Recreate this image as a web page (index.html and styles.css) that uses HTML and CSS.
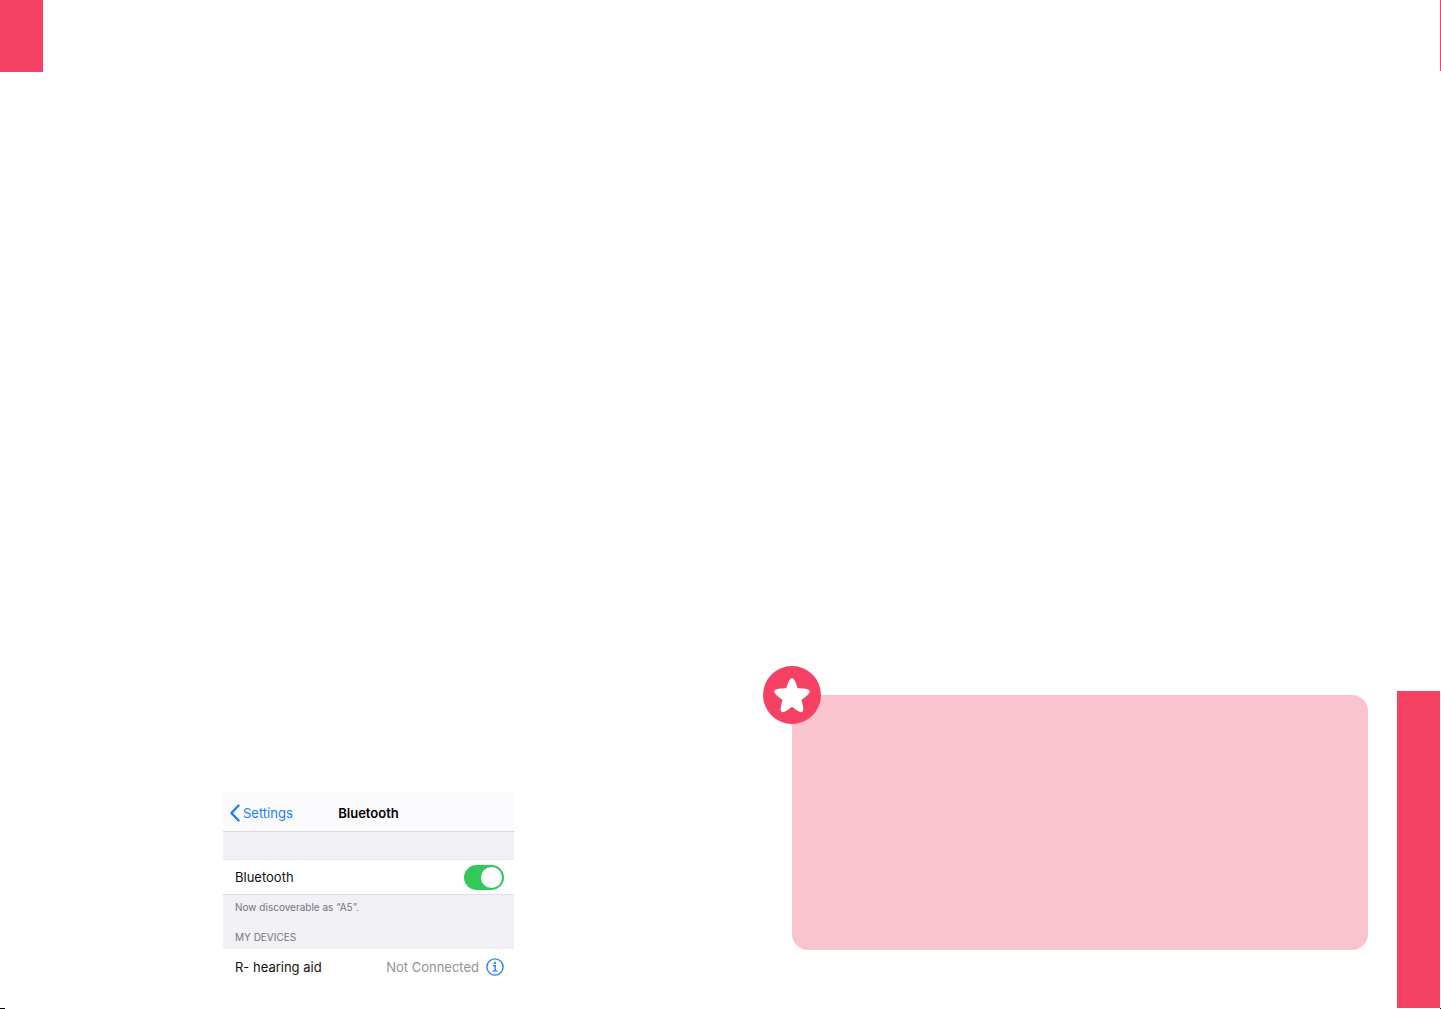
FILE: index.html
```html
<!DOCTYPE html>
<html lang="en">
<head>
<meta charset="utf-8">
<title>Bluetooth</title>
<link rel="stylesheet" href="styles.css">
</head>
<body>
<div class="spread">
  <section class="page page-left">
    <div class="tab"></div>
    <main class="phone">
      <header class="nav">
        <a class="back" href="#settings">
          <svg width="10" height="18" viewBox="0 0 10 18" aria-hidden="true"><path d="M8.600 1.500 1.400 9 8.600 16.500" fill="none" stroke="currentColor" stroke-width="2.300" stroke-linecap="round" stroke-linejoin="round"/></svg>
          <span>Settings</span>
        </a>
        <h1 class="title">Bluetooth</h1>
      </header>
      <div class="row row-toggle">
        <label for="bluetooth">Bluetooth</label>
        <input class="switch" id="bluetooth" type="checkbox" role="switch" checked>
      </div>
      <div class="notes">
        <p>Now discoverable as “A5”.</p>
        <h2>MY DEVICES</h2>
      </div>
      <div class="row">
        <span class="device">R- hearing aid</span>
        <span class="status">Not Connected</span>
        <button class="info" type="button" aria-label="Device information">
          <svg width="18" height="18" viewBox="0 0 18 18" fill="none" stroke="currentColor"><circle cx="9" cy="9" r="8.100" stroke-width="1.400"/><path d="M7 7.700h2.200v5M6.800 12.900h4.600" stroke-width="1.400"/><circle cx="8.900" cy="4.900" r="1.200" fill="currentColor" stroke="none"/></svg>
        </button>
      </div>
    </main>
    <div class="crop-mark"></div>
  </section>
  <section class="page page-right">
    <div class="edge-line"></div>
    <div class="lower">
      <aside class="callout">
        <svg class="star" width="58" height="58" viewBox="0 0 58 58" aria-hidden="true"><circle cx="29" cy="29" r="29" fill="#f54163"/><path d="M29 12.200C31.200 12.200 33 16.500 34.700 22.200C40 22.300 46 22.800 46.700 25C47.400 27.200 43 30.500 38.400 34C39.900 39 41.300 44.400 39.400 45.800C37.500 47.200 33.300 44 29 40.700C24.700 44 20.500 47.200 18.600 45.800C16.700 44.400 18.100 39 19.600 34C15 30.500 10.600 27.200 11.300 25C12 22.800 18 22.300 23.300 22.200C25 16.500 26.800 12.200 29 12.200Z" fill="#fff"/></svg>
      </aside>
      <div class="side-bar"></div>
    </div>
    <div class="crop-mark crop-mark-end"></div>
  </section>
</div>
</body>
</html>
```
FILE: styles.css
```css
* {
  box-sizing: border-box;
}

body {
  margin: 0;
  background: #fff;
  color: #111;
  font: 13px/18px Inter, "Liberation Sans", sans-serif;
}

h1, h2, p {
  margin: 0;
  font: inherit;
}

.spread {
  display: grid;
  grid-template-columns: 1fr 1fr;
  min-height: 100vh;
}

.page {
  display: flex;
  flex-direction: column;
}

.tab {
  width: 43px;
  height: 72px;
  background: #f54163;
}

.phone {
  width: 291px;
  margin: auto 0 23px 223px;
  background: #f0f0f5;
}

.nav {
  display: grid;
  grid-template-columns: 1fr auto 1fr;
  align-items: center;
  height: 40px;
  padding: 3px 7px 0;
  background: #fbfbfd;
  border-bottom: 1px solid #d9d9dd;
}

.back {
  display: flex;
  align-items: center;
  gap: 3px;
  color: #167efb;
  text-decoration: none;
}

.title {
  color: #000;
  font-weight: 600;
}

.row {
  display: flex;
  align-items: center;
  height: 36px;
  padding: 0 10px 0 12px;
  background: #fff;
}

.row-toggle {
  justify-content: space-between;
  margin-top: 27px;
  border-top: 1px solid #e8e8ea;
  border-bottom: 1px solid #dedee1;
}

.switch {
  appearance: none;
  display: flex;
  align-items: center;
  justify-content: flex-end;
  width: 40px;
  height: 25px;
  margin: 0;
  padding: 0 2px;
  border-radius: 13px;
  background: #34c759;
}

.switch::before {
  content: "";
  width: 21px;
  height: 21px;
  border-radius: 50%;
  background: #fff;
}

.switch:not(:checked) {
  justify-content: flex-start;
  background: #ddd;
}

.notes {
  display: flex;
  flex-direction: column;
  gap: 16px;
  padding: 5px 12px;
  color: #77777c;
  font-size: 10px;
  line-height: 14px;
}

.device {
  flex: 1;
}

.status {
  color: #929296;
}

.info {
  display: flex;
  margin-left: 7px;
  padding: 0;
  border: 0;
  background: none;
  color: #2b86ee;
}

.crop-mark {
  width: 5px;
  height: 1px;
  background: #000;
}

.crop-mark-end {
  align-self: flex-end;
  width: 1px;
}

.edge-line {
  align-self: flex-end;
  width: 1px;
  height: 71px;
  background: #f54163;
}

.lower {
  display: flex;
  align-items: flex-start;
  margin: auto 1px 0 71px;
}

.callout {
  position: relative;
  flex: 1;
  height: 255px;
  margin: 4px 29px 0 0;
  border-radius: 16px;
  background: #fac4ce;
}

.star {
  position: absolute;
  top: -29px;
  left: -29px;
}

.side-bar {
  width: 43px;
  height: 317px;
  background: #f54163;
}
```
